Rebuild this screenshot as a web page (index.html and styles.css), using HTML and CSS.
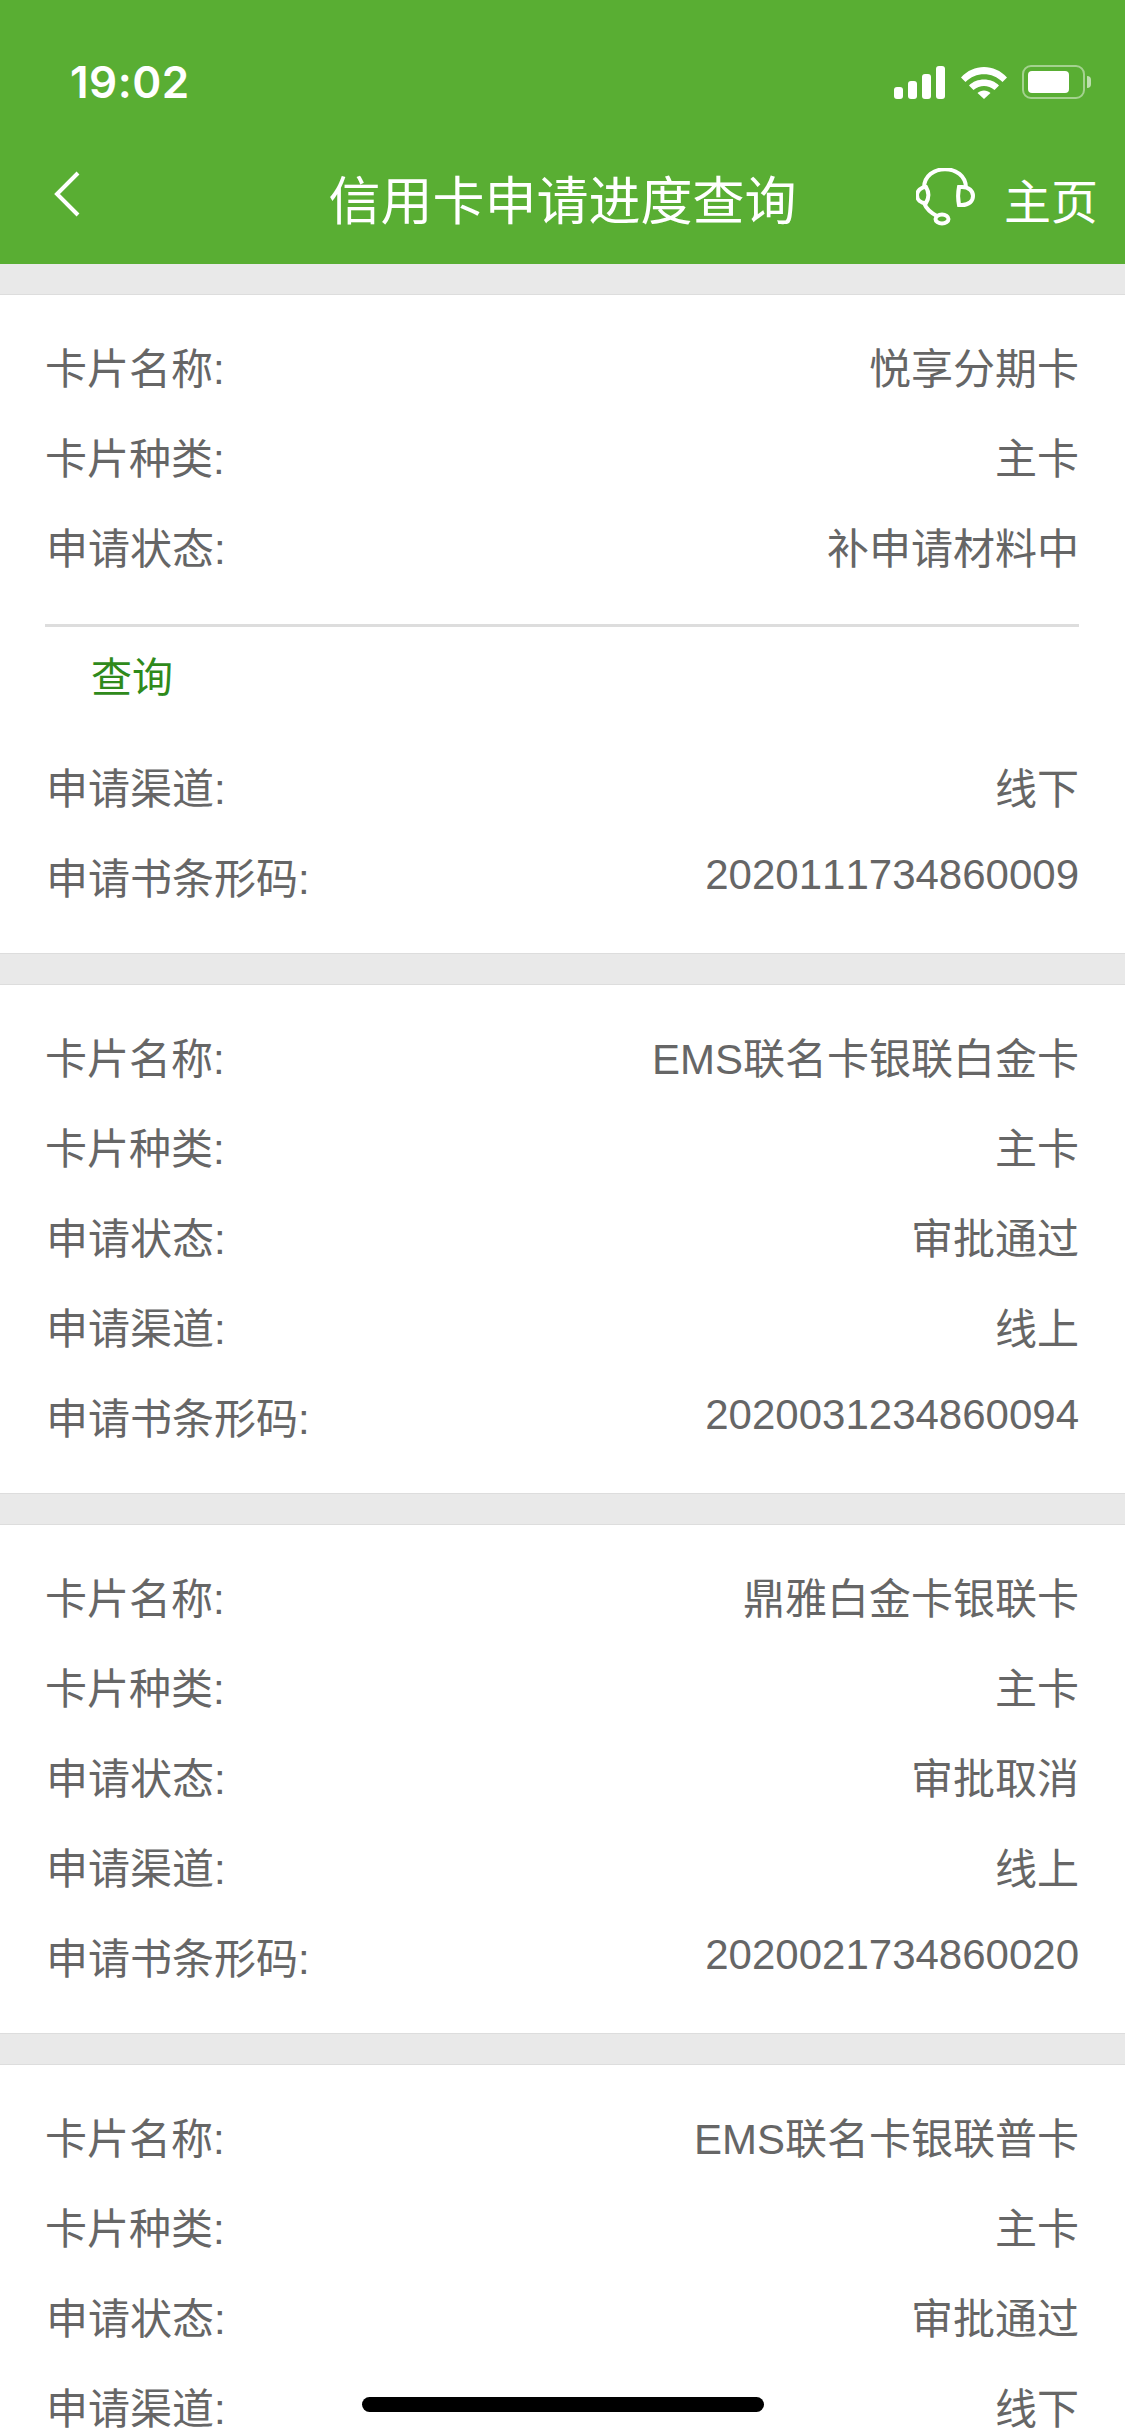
FILE: index.html
```html
<!DOCTYPE html>
<html lang="zh-CN">
<head>
    <meta charset="UTF-8">
    <meta name="viewport" content="width=device-width, initial-scale=1.0">
    <title>信用卡申请进度查询</title>
    <link rel="stylesheet" href="styles.css">
</head>
<body>
    <div class="header">
        <!-- Status bar -->
        <div class="status-bar">
            <span class="time">19:02</span>
            <div class="status-icons">
                <svg class="signal" width="52" height="33" viewBox="0 0 52 33">
                    <rect x="0" y="21" width="9" height="12" rx="3"/>
                    <rect x="14" y="15" width="9" height="18" rx="3"/>
                    <rect x="28" y="8" width="9" height="25" rx="3"/>
                    <rect x="42" y="0" width="9" height="33" rx="3"/>
                </svg>
                <svg class="wifi" width="46" height="33" viewBox="0 0 46 33">
                    <path d="M0 11.500C12.500 -2.500 33.500 -2.500 46 11.500L41.500 16C31.500 5.500 14.500 5.500 4.500 16Z"/>
                    <path d="M8 19.500C15.500 11.500 30.500 11.500 38 19.500L33.500 24C27 18.500 19 18.500 12.500 24Z"/>
                    <path d="M16.500 27C20 23.500 26 23.500 29.500 27L23 33Z"/>
                </svg>
                <div class="battery">
                    <div class="battery-body"><div class="battery-fill"></div></div>
                    <div class="battery-nub"></div>
                </div>
            </div>
        </div>
        <!-- Nav bar -->
        <div class="nav-bar">
            <svg class="back" width="28" height="48" viewBox="0 0 28 48">
                <path d="M25 3L4 24L25 45"/>
            </svg>
            <div class="nav-title">信用卡申请进度查询</div>
            <div class="nav-right">
                <svg class="headset" width="60" height="60" viewBox="0 0 60 60">
                    <path d="M8 20C8 -5 50 -5 50 20"/>
                    <path d="M10 19C5 19 1 23 1 27C1 32 5 35 10 35C13 30 13 24 10 19Z"/>
                    <path d="M43 19H46C53 19 57 23 57 28C57 33 53 37 46 37H43C42 32 42 24 43 19Z"/>
                    <path d="M8 35C10 40 15 45 21 48"/>
                    <ellipse cx="26" cy="51" rx="6.500" ry="4.500"/>
                </svg>
                <span>主页</span>
            </div>
        </div>
    </div>

    <div class="content">
        <div class="card">
            <div class="row"><span>卡片名称:</span><span>悦享分期卡</span></div>
            <div class="row"><span>卡片种类:</span><span>主卡</span></div>
            <div class="row"><span class="indent">申请状态:</span><span>补申请材料中</span></div>
            <div class="query"><span>查询</span></div>
            <div class="row"><span class="indent">申请渠道:</span><span>线下</span></div>
            <div class="row"><span class="indent">申请书条形码:</span><span>2020111734860009</span></div>
        </div>

        <div class="card">
            <div class="row"><span>卡片名称:</span><span>EMS联名卡银联白金卡</span></div>
            <div class="row"><span>卡片种类:</span><span>主卡</span></div>
            <div class="row"><span class="indent">申请状态:</span><span>审批通过</span></div>
            <div class="row"><span class="indent">申请渠道:</span><span>线上</span></div>
            <div class="row"><span class="indent">申请书条形码:</span><span>2020031234860094</span></div>
        </div>

        <div class="card">
            <div class="row"><span>卡片名称:</span><span>鼎雅白金卡银联卡</span></div>
            <div class="row"><span>卡片种类:</span><span>主卡</span></div>
            <div class="row"><span class="indent">申请状态:</span><span>审批取消</span></div>
            <div class="row"><span class="indent">申请渠道:</span><span>线上</span></div>
            <div class="row"><span class="indent">申请书条形码:</span><span>2020021734860020</span></div>
        </div>

        <div class="card">
            <div class="row"><span>卡片名称:</span><span>EMS联名卡银联普卡</span></div>
            <div class="row"><span>卡片种类:</span><span>主卡</span></div>
            <div class="row"><span class="indent">申请状态:</span><span>审批通过</span></div>
            <div class="row"><span class="indent">申请渠道:</span><span>线下</span></div>
        </div>
    </div>

    <div class="home-indicator"></div>
</body>
</html>
```

FILE: styles.css
```css
* {
    box-sizing: border-box;
    margin: 0;
    padding: 0;
}

html, body {
    height: 2436px;
    overflow: hidden;
}

body {
    position: relative;
    background-color: #e9e9e9;
    font-family: "Liberation Sans", "Noto Sans CJK SC", sans-serif;
    color: #666;
}

.header {
    height: 264px;
    background-color: #59ae33;
    color: white;
}

.status-bar {
    height: 132px;
    padding: 60px 34px 0 70px;
    display: flex;
    justify-content: space-between;
    align-items: flex-start;
}

.time {
    font-family: Inter, sans-serif;
    font-size: 44px;
    font-weight: 600;
    line-height: 44px;
    letter-spacing: 0.5px;
}

.status-icons {
    display: flex;
    align-items: center;
    gap: 15px;
    margin-top: 5px;
    fill: white;
}

.battery {
    display: flex;
    align-items: center;
    gap: 2px;
}

.battery-body {
    width: 63px;
    height: 34px;
    padding: 4px;
    border: 2px solid rgba(255, 255, 255, 0.45);
    border-radius: 9px;
}

.battery-fill {
    width: 41px;
    height: 100%;
    background-color: white;
    border-radius: 4px;
}

.battery-nub {
    width: 4px;
    height: 12px;
    background-color: rgba(255, 255, 255, 0.6);
    border-radius: 0 4px 4px 0;
}

.nav-bar {
    height: 132px;
    padding: 0 27px;
    display: grid;
    grid-template-columns: 1fr auto 1fr;
    align-items: center;
}

.back {
    margin: -8px 0 0 26px;
}

.back path {
    fill: none;
    stroke: white;
    stroke-width: 4;
}

.nav-title {
    font-size: 52px;
    margin-top: -2px;
}

.nav-right {
    display: flex;
    align-items: center;
    justify-content: flex-end;
    gap: 28px;
    font-size: 47px;
}

.headset {
    fill: none;
    stroke: white;
    stroke-width: 4;
}

.content {
    padding-top: 30px;
    display: flex;
    flex-direction: column;
    gap: 30px;
}

.card {
    padding: 25px 46px 33px 45px;
    background-color: white;
    border-top: 1px solid #ddd;
    border-bottom: 1px solid #ddd;
}

.row {
    height: 90px;
    display: flex;
    justify-content: space-between;
    align-items: center;
    font-size: 42px;
    font-kerning: none;
}

.indent {
    margin-left: 1px;
}

.query {
    height: 116px;
    margin-top: 34px;
    padding: 17px 0 0 46px;
    border-top: 3px solid #ddd;
    font-size: 41px;
    color: #2f8a1b;
}

.home-indicator {
    position: absolute;
    left: 362px;
    top: 2397px;
    width: 402px;
    height: 15px;
    background-color: black;
    border-radius: 8px;
}
```
